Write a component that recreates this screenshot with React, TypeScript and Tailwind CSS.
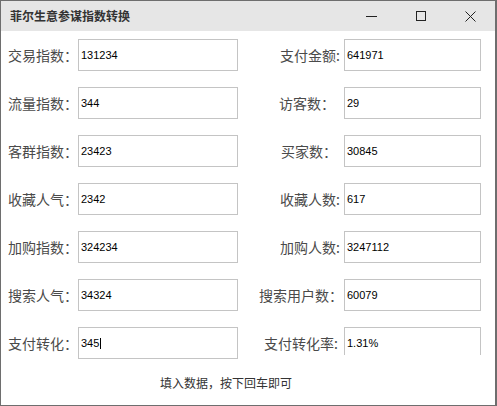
import React from 'react';

interface FieldRow {
  left: string;
  leftValue: string;
  right: string;
  rightValue: string;
  rightLabelClass: string;
}

const ROWS: FieldRow[] = [
  { left: '交易指数：', leftValue: '131234', right: '支付金额:', rightValue: '641971', rightLabelClass: 'pl-[42px]' },
  { left: '流量指数：', leftValue: '344', right: '访客数：', rightValue: '29', rightLabelClass: 'pl-[41px]' },
  { left: '客群指数：', leftValue: '23423', right: '买家数：', rightValue: '30845', rightLabelClass: 'pl-[43px]' },
  { left: '收藏人气：', leftValue: '2342', right: '收藏人数:', rightValue: '617', rightLabelClass: 'pl-[42px]' },
  { left: '加购指数：', leftValue: '324234', right: '加购人数:', rightValue: '3247112', rightLabelClass: 'pl-[42px]' },
  { left: '搜索人气：', leftValue: '34324', right: '搜索用户数：', rightValue: '60079', rightLabelClass: 'pl-[21px]' },
  { left: '支付转化：', leftValue: '345', right: '支付转化率:', rightValue: '1.31%', rightLabelClass: 'pl-[26px]' },
];

const labelFont = { fontFamily: '"Noto Sans CJK SC", "Noto Sans", sans-serif' };
const valueFont = { fontFamily: '"Liberation Sans", Arial, sans-serif' };

function TextBox({ value, width, caret, open }: { value: string; width: string; caret?: boolean; open?: boolean }) {
  return (
    <div
      className={`relative flex items-center border border-[#c4c4c4] bg-white pl-[2px] text-[11px] text-black ${width} ${
        open ? 'h-[28px] self-start border-b-0' : 'h-[32px]'
      }`}
      style={valueFont}
    >
      <span className={open ? 'pt-[4px]' : ''}>{value}</span>
      {caret && <span className="ml-[1px] inline-block h-[11px] w-px bg-black" />}
    </div>
  );
}

function TitleBar() {
  return (
    <div className="flex h-[30px] items-center bg-[#e6e6e6]">
      <span className="pl-[9px] text-[12px] font-bold text-[#333]" style={labelFont}>
        菲尔生意参谋指数转换
      </span>
      <div className="ml-auto flex h-full items-center">
        <div className="flex w-[50px] items-center justify-center pl-[2px]">
          <span className="block h-px w-[11px] bg-[#222]" />
        </div>
        <div className="flex w-[50px] items-center justify-center pl-[2px]">
          <span className="block h-[10px] w-[10px] border border-[#222]" />
        </div>
        <div className="flex w-[50px] items-center justify-center pl-[3px] pr-[2px]">
          <svg width="11" height="11" viewBox="0 0 11 11">
            <path d="M0.5 0.5 L10.5 10.5 M10.5 0.5 L0.5 10.5" stroke="#222" strokeWidth="1" fill="none" />
          </svg>
        </div>
      </div>
    </div>
  );
}

export default function App() {
  return (
    <div className="h-[406px] w-[497px] overflow-hidden bg-white">
      <div className="flex h-full flex-col border border-[#6e6e6e] border-r-2">
        <TitleBar />
        <div className="flex flex-col gap-[16px] pt-[8px]">
          {ROWS.map((row, i) => (
            <div key={row.left} className="flex h-[32px] items-center">
              <span className="w-[77px] pl-[7px] text-[14px] text-[#4a4a4a]" style={labelFont}>
                {row.left}
              </span>
              <TextBox value={row.leftValue} width="w-[160px]" caret={i === 6} />
              <span
                className={`w-[106px] whitespace-nowrap text-[14px] text-[#4a4a4a] ${row.rightLabelClass}`}
                style={labelFont}
              >
                {row.right}
              </span>
              <TextBox value={row.rightValue} width="w-[137px]" open={i === 6} />
            </div>
          ))}
        </div>
        <div className="pl-[159px] pt-[15px] text-[12px] text-[#333]" style={labelFont}>
          填入数据，按下回车即可
        </div>
      </div>
    </div>
  );
}
